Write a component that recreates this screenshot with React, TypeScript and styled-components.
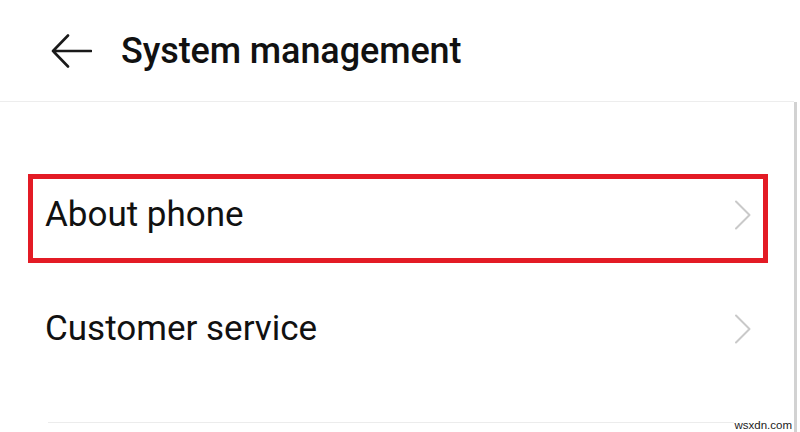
import styled, { createGlobalStyle } from "styled-components";

const GlobalStyle = createGlobalStyle`
  html, body {
    margin: 0;
    padding: 0;
    background: #ffffff;
  }
  body {
    font-family: Roboto, "Liberation Sans", sans-serif;
    color: #111111;
  }
`;

const Screen = styled.div`
  position: relative;
  width: 800px;
  height: 432px;
  overflow: hidden;
  background: #ffffff;
`;

const Header = styled.header`
  display: flex;
  align-items: center;
  height: 102px;
  padding-left: 51px;
  margin-right: 6px;
  border-bottom: 1px solid #ededed;
  box-sizing: border-box;
`;

const BackButton = styled.button`
  display: flex;
  align-items: center;
  padding: 0;
  border: 0;
  background: none;
  color: #1a1a1a;
`;

const Title = styled.h1`
  margin: 0 0 0 29px;
  font-size: 36px;
  font-weight: 500;
  letter-spacing: -0.1px;
  color: #111111;
`;

const Body = styled.main`
  height: 330px;
  margin-right: 3px;
  border-right: 3px solid #d2d2d2;
  padding-top: 72px;
  box-sizing: border-box;
`;

const Highlight = styled.div`
  margin: 0 26px 0 28px;
  height: 89px;
  border: 5px solid #e31b25;
  box-sizing: border-box;
  display: flex;
`;

const Row = styled.div<{ $inset: number; $height: number }>`
  flex: 1;
  display: flex;
  align-items: center;
  justify-content: space-between;
  height: ${(p) => p.$height}px;
  padding: 0 ${(p) => p.$inset - 1}px 0 ${(p) => p.$inset}px;
  box-sizing: border-box;
`;

const PlainRow = styled(Row)`
  margin: 12px 26px 0 28px;
`;

const Label = styled.span`
  font-size: 35px;
  font-weight: 400;
  color: #111111;
  padding-bottom: 8px;
`;

const Chevron = styled.svg`
  width: 18px;
  height: 30px;
  margin-bottom: 8px;
`;

const Divider = styled.hr`
  margin: 32px 49px 0 48px;
  border: 0;
  border-top: 1px solid #ececec;
`;

const Watermark = styled.span`
  position: absolute;
  right: 8px;
  bottom: 1px;
  font-family: "Liberation Sans", Arial, sans-serif;
  font-size: 11.5px;
  color: #222222;
  background: #ffffff;
`;

const ArrowRight = () => (
  <Chevron viewBox="0 0 18 30" fill="none">
    <path d="M2 1.5 L15.5 15 L2 28.5" stroke="#c9c9c9" strokeWidth="2" strokeLinecap="round" strokeLinejoin="round" />
  </Chevron>
);

export default function App() {
  return (
    <Screen>
      <GlobalStyle />
      <Header>
        <BackButton aria-label="Back">
          <svg width="41" height="34" viewBox="0 0 41 34" fill="none">
            <path d="M17 1.5 L2 17 L17 32.5 M2 17 H40" stroke="#1a1a1a" strokeWidth="2.6" strokeLinecap="round" strokeLinejoin="round" />
          </svg>
        </BackButton>
        <Title>System management</Title>
      </Header>
      <Body>
        <Highlight>
          <Row $inset={12} $height={79}>
            <Label>About phone</Label>
            <ArrowRight />
          </Row>
        </Highlight>
        <PlainRow $inset={17} $height={115}>
          <Label>Customer service</Label>
          <ArrowRight />
        </PlainRow>
        <Divider />
      </Body>
      <Watermark>wsxdn.com</Watermark>
    </Screen>
  );
}
